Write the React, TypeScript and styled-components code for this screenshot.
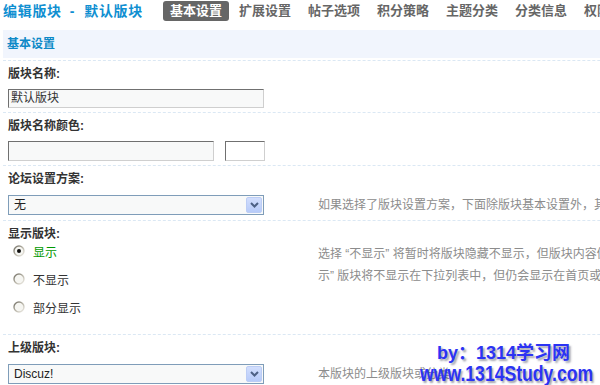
import React from 'react';
import styled, { createGlobalStyle } from 'styled-components';

const GlobalStyle = createGlobalStyle`
  html, body {
    margin: 0;
    padding: 0;
    background: #fff;
    overflow: hidden;
  }
  body {
    font-family: "Liberation Sans", "Noto Sans CJK SC", sans-serif;
    font-size: 12px;
    color: #333;
  }
`;

const Page = styled.div`
  position: relative;
  width: 900px;
  height: 385px;
  overflow: hidden;
`;

const TopBar = styled.div`
  display: flex;
  align-items: center;
  height: 20px;
  padding: 1px 0 0 3px;
`;

const Title = styled.h3`
  margin: 0;
  width: 160px;
  font-size: 14px;
  line-height: 20px;
  font-weight: bold;
  letter-spacing: 0.7px;
  color: #0f8fd1;
  white-space: nowrap;
`;

const TitleSep = styled.span`
  padding: 0 9px 0 8px;
`;

const Tabs = styled.div`
  display: flex;
`;

const Tab = styled.span<{ $active?: boolean }>`
  height: 20px;
  line-height: 20px;
  padding: 0 7px;
  margin-right: 3px;
  border-radius: 3px;
  font-size: 13px;
  font-weight: bold;
  white-space: nowrap;
  color: ${(p) => (p.$active ? '#fff' : '#666')};
  background: ${(p) => (p.$active ? '#666' : 'transparent')};
`;

const Header = styled.div`
  margin: 9px 0 0 3px;
  height: 28px;
  line-height: 28px;
  padding-left: 4px;
  background: #f1f5fd;
  color: #0d89c7;
  font-weight: bold;
`;

const Form = styled.div`
  margin: 2px 0 0 3px;
`;

const Section = styled.div`
  border-top: 1px dashed #dbe8f4;
  padding: 4px 0 4px 5px;
`;

const Label = styled.div`
  height: 18px;
  line-height: 18px;
  font-weight: bold;
  color: #333;
  margin-bottom: 6px;
`;

const FieldRow = styled.div<{ $top?: boolean }>`
  display: flex;
  align-items: ${(p) => (p.$top ? 'flex-start' : 'center')};
`;

const FieldCell = styled.div`
  display: flex;
  align-items: center;
  width: 310px;
  flex-shrink: 0;
`;

const Tip = styled.div<{ $top?: boolean }>`
  color: #8c8c8c;
  white-space: nowrap;
  line-height: 22px;
  margin-top: ${(p) => (p.$top ? '-6px' : '0')};
`;

const TextInput = styled.div<{ $w: number; $h?: number }>`
  box-sizing: border-box;
  width: ${(p) => p.$w}px;
  height: ${(p) => p.$h ?? 20}px;
  line-height: ${(p) => (p.$h ?? 20) - 2}px;
  padding-left: 2px;
  background: #f8f9f9;
  border: 1px solid;
  border-color: #707070 #cfcfcf #cfcfcf #707070;
  color: #333;
`;

const ColorBox = styled.div`
  box-sizing: border-box;
  width: 40px;
  height: 20px;
  margin-left: 11px;
  background: #fff;
  border: 1px solid;
  border-color: #707070 #cfcfcf #cfcfcf #707070;
`;

const SelectBox = styled.div`
  box-sizing: border-box;
  display: flex;
  align-items: center;
  width: 256px;
  height: 20px;
  padding: 1px;
  border: 1px solid #7f9db9;
  background: #f8f9f9;
`;

const SelectText = styled.span`
  flex: 1;
  padding-left: 4px;
  line-height: 16px;
  color: #222;
`;

const SelectArrow = styled.span`
  display: flex;
  align-items: center;
  justify-content: center;
  width: 16px;
  height: 16px;
  border-radius: 2px;
  background: linear-gradient(180deg, #d2defd 0%, #b7cbf9 100%);
  border: 1px solid #bccdf5;
  box-sizing: border-box;
`;

const RadioList = styled.ul`
  list-style: none;
  margin: -12px 0 9px;
  padding: 0 0 0 5px;
`;

const RadioItem = styled.li<{ $checked?: boolean }>`
  display: flex;
  align-items: center;
  height: 28px;
  color: ${(p) => (p.$checked ? '#090' : '#333')};
`;

const RadioLabel = styled.span`
  margin-left: 8px;
`;

const Watermark = styled.div`
  position: absolute;
  left: 420px;
  top: 343px;
  font-family: "Liberation Sans", "Noto Sans CJK SC", sans-serif;
  font-weight: bold;
  color: #2b33f4;
  text-shadow: 2px 2px 2px rgba(90, 90, 110, 0.55);
  pointer-events: none;
`;

const MarkLine = styled.div`
  font-size: 18px;
  line-height: 20px;
  padding-left: 17px;
  white-space: nowrap;
`;

const MarkUrl = styled.div`
  font-size: 22px;
  line-height: 22px;
  white-space: nowrap;
  transform: scaleX(0.8);
  transform-origin: left center;
`;

const Chevron = () => (
  <svg width="9" height="6" viewBox="0 0 9 6">
    <path d="M1 1 L4.5 4.5 L8 1" fill="none" stroke="#4d6185" strokeWidth="2" />
  </svg>
);

const Radio = ({ checked }: { checked?: boolean }) => (
  <svg width="12" height="12" viewBox="0 0 12 12">
    <defs>
      <linearGradient id="rg" x1="0" y1="0" x2="1" y2="1">
        <stop offset="0" stopColor="#6f6c62" />
        <stop offset="0.5" stopColor="#b8b4a8" />
        <stop offset="1" stopColor="#f2f0ea" />
      </linearGradient>
    </defs>
    <circle cx="6" cy="6" r="5" fill="#f6f6f2" stroke="url(#rg)" strokeWidth="1.4" />
    {checked && <circle cx="6" cy="6" r="2" fill="#111" />}
  </svg>
);

const Select = ({ value }: { value: string }) => (
  <SelectBox>
    <SelectText>{value}</SelectText>
    <SelectArrow>
      <Chevron />
    </SelectArrow>
  </SelectBox>
);

const tabs = ['基本设置', '扩展设置', '帖子选项', '积分策略', '主题分类', '分类信息', '权限相关', '附件类型'];

export default function App() {
  return (
    <Page>
      <GlobalStyle />
      <TopBar>
        <Title>
          编辑版块<TitleSep>-</TitleSep>默认版块
        </Title>
        <Tabs>
          {tabs.map((t, i) => (
            <Tab key={t} $active={i === 0}>
              {t}
            </Tab>
          ))}
        </Tabs>
      </TopBar>
      <Header>基本设置</Header>
      <Form>
        <Section>
          <Label>版块名称:</Label>
          <FieldRow>
            <FieldCell>
              <TextInput $w={256} $h={19}>默认版块</TextInput>
            </FieldCell>
          </FieldRow>
        </Section>
        <Section>
          <Label>版块名称颜色:</Label>
          <FieldRow>
            <FieldCell>
              <TextInput $w={206} />
              <ColorBox />
            </FieldCell>
          </FieldRow>
        </Section>
        <Section>
          <Label>论坛设置方案:</Label>
          <FieldRow>
            <FieldCell>
              <Select value="无" />
            </FieldCell>
            <Tip>如果选择了版块设置方案，下面除版块基本设置外，其他设置都将被覆盖</Tip>
          </FieldRow>
        </Section>
        <Section>
          <Label>显示版块:</Label>
          <FieldRow $top>
            <FieldCell>
              <RadioList>
                <RadioItem $checked>
                  <Radio checked />
                  <RadioLabel>显示</RadioLabel>
                </RadioItem>
                <RadioItem>
                  <Radio />
                  <RadioLabel>不显示</RadioLabel>
                </RadioItem>
                <RadioItem>
                  <Radio />
                  <RadioLabel>部分显示</RadioLabel>
                </RadioItem>
              </RadioList>
            </FieldCell>
            <Tip $top>
              选择 “不显示” 将暂时将版块隐藏不显示，但版块内容仍将保留，且用户仍可通过直接提供带有 fid 的 URL 访问到此版块；选择 “部分显
              <br />
              示” 版块将不显示在下拉列表中，但仍会显示在首页或版块列表中
            </Tip>
          </FieldRow>
        </Section>
        <Section>
          <Label>上级版块:</Label>
          <FieldRow>
            <FieldCell>
              <Select value="Discuz!" />
            </FieldCell>
            <Tip>本版块的上级版块或分类</Tip>
          </FieldRow>
        </Section>
      </Form>
      <Watermark>
        <MarkLine>by：1314学习网</MarkLine>
        <MarkUrl>www.1314Study.com</MarkUrl>
      </Watermark>
    </Page>
  );
}
